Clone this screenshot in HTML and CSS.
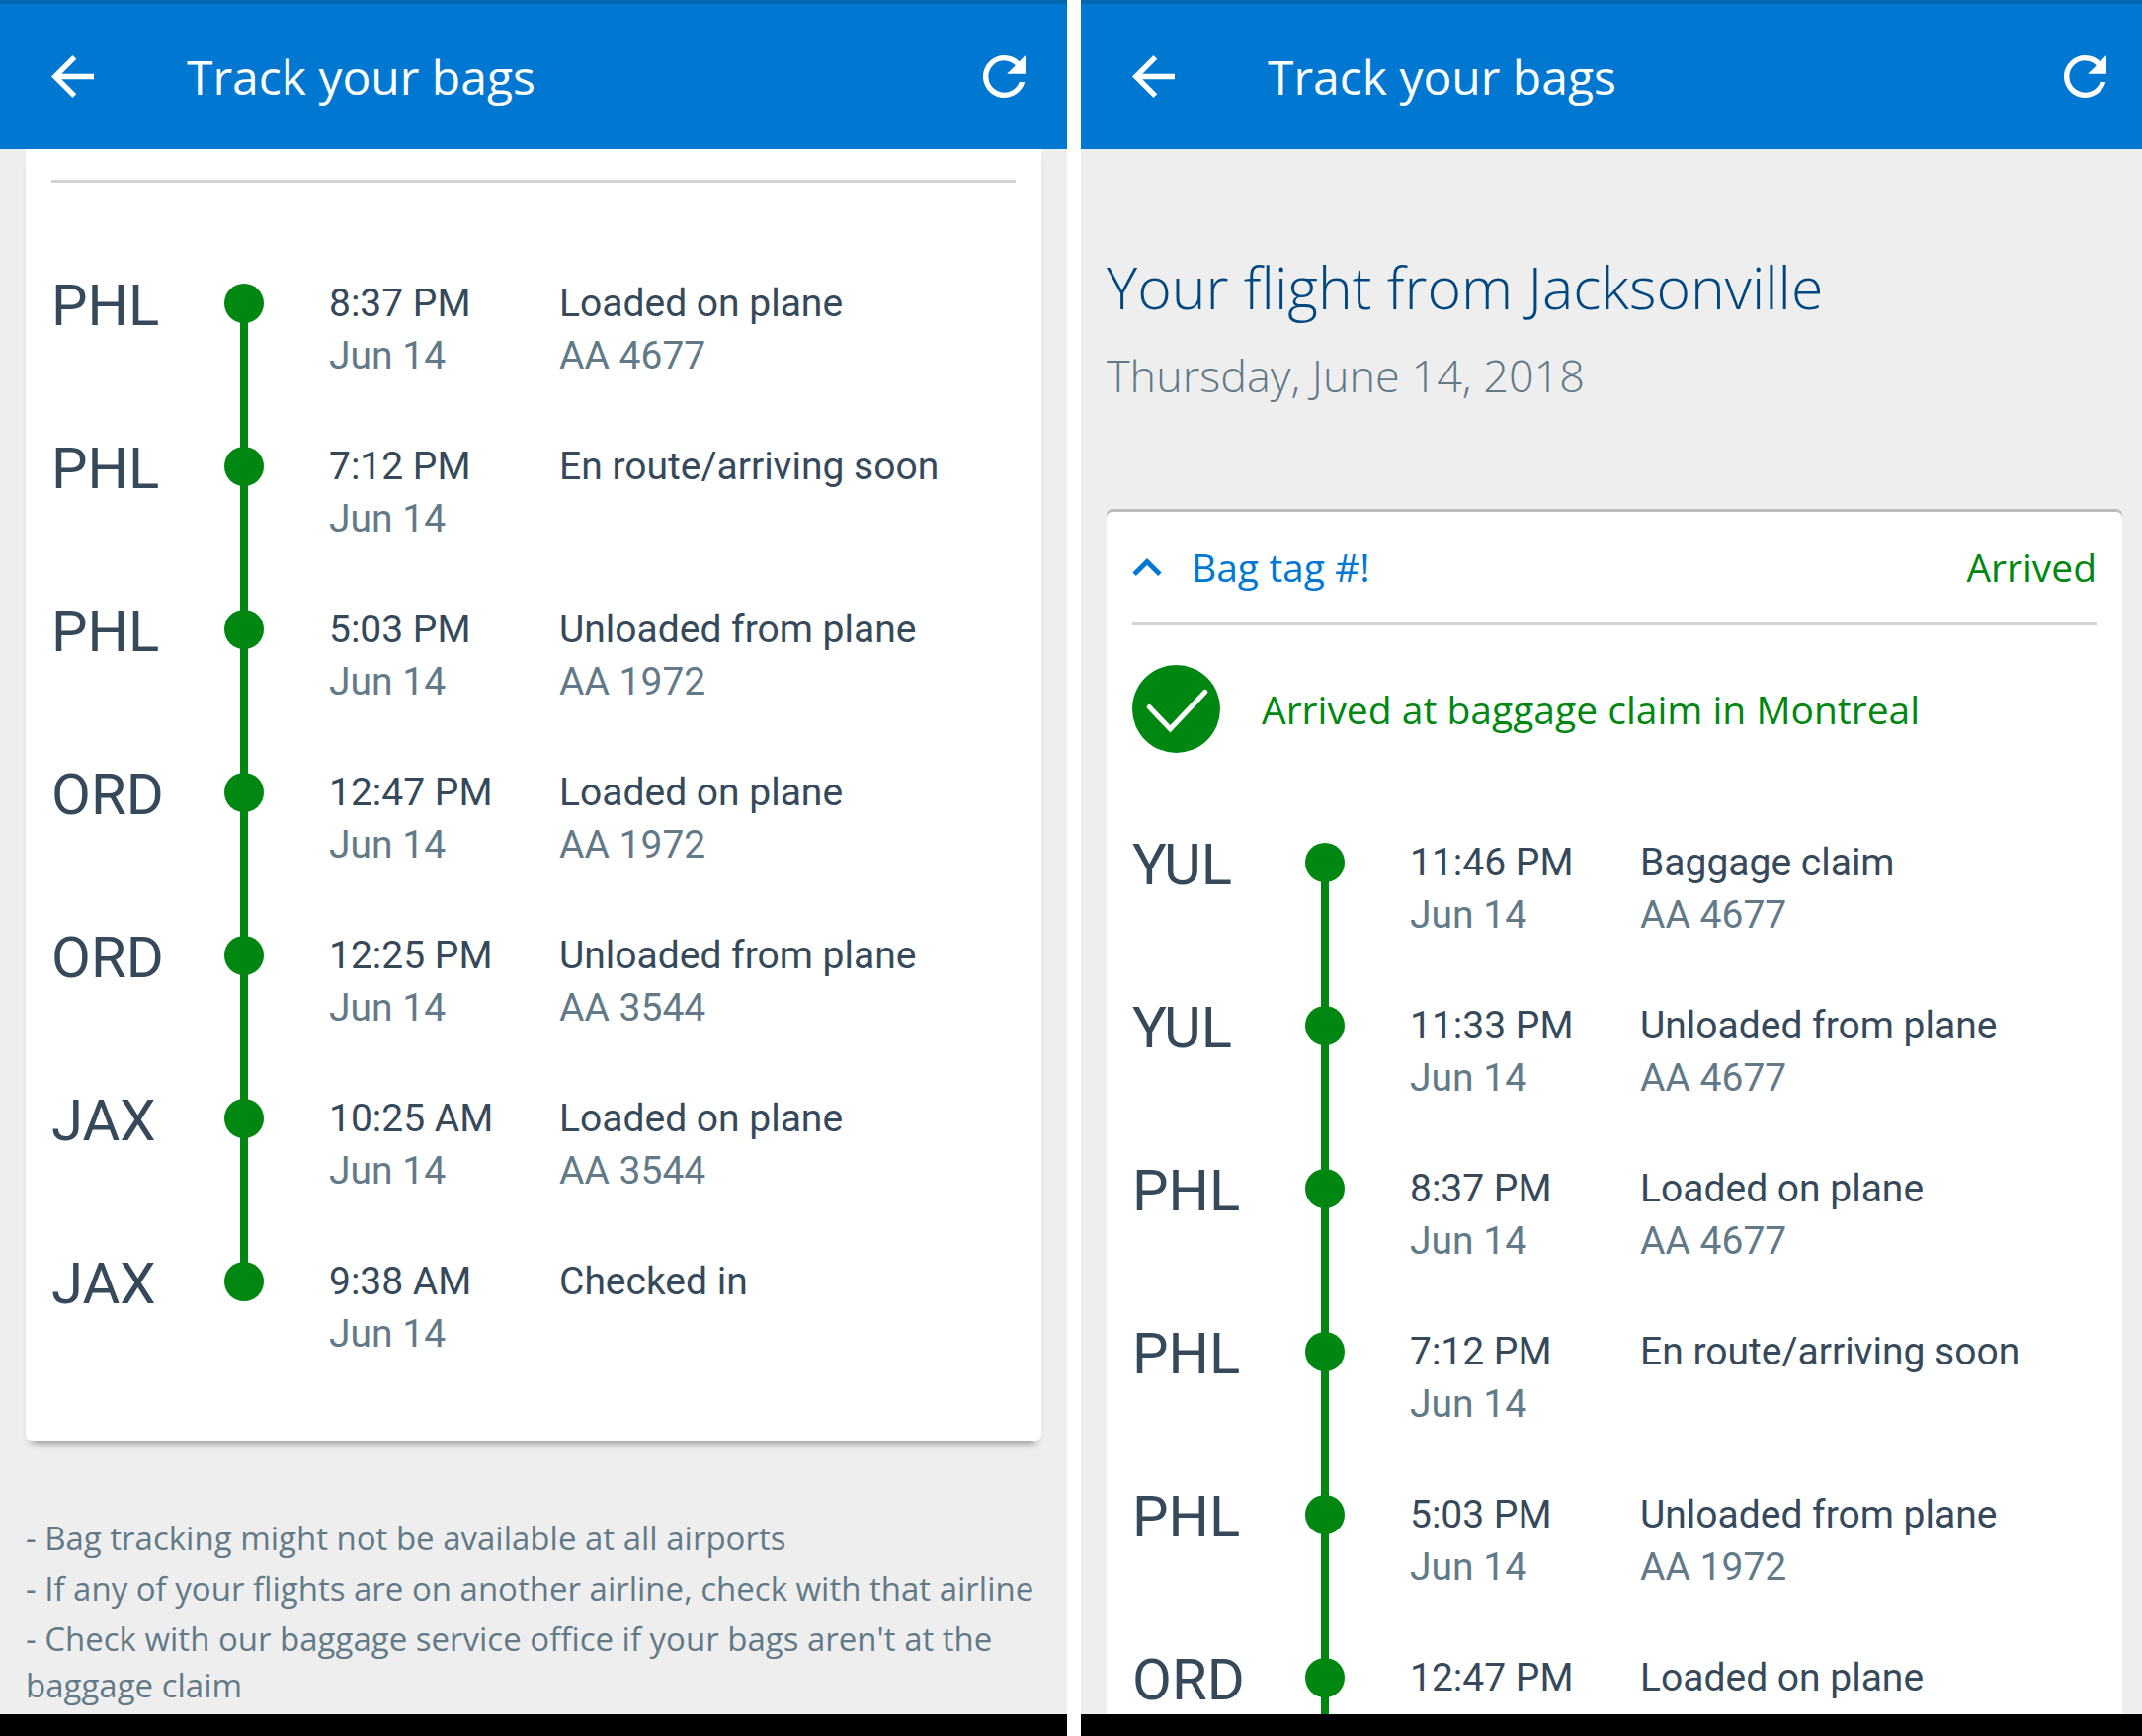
FILE: index.html
```html
<!DOCTYPE html>
<html lang="en">
<head>
<meta charset="utf-8">
<title>Track your bags</title>
<link rel="stylesheet" href="styles.css">
</head>
<body>
<div class="screens">
  <section class="screen">
    <header class="appbar">
      <button class="icon-button" type="button" aria-label="Back"><svg viewBox="4 4 16 16"><path d="M20 11H7.83l5.59-5.59L12 4l-8 8 8 8 1.41-1.41L7.83 13H20v-2z"/></svg></button>
      <h1 class="appbar-title">Track your bags</h1>
      <button class="icon-button" type="button" aria-label="Refresh"><svg viewBox="4 4 16 16"><path d="M17.65 6.35A7.958 7.958 0 0 0 12 4a8 8 0 1 0 7.73 10h-2.08A6 6 0 1 1 12 6c1.66 0 3.14.69 4.22 1.78L13 11h7V4l-2.35 2.35z"/></svg></button>
    </header>
    <main class="content">
      <article class="card card-end">
        <hr class="divider">
        <ol class="timeline">
          <li class="event"><span class="code">PHL</span><span class="marker"></span><div class="lines"><span>8:37 PM</span><span class="muted">Jun 14</span></div><div class="lines"><span>Loaded on plane</span><span class="muted">AA 4677</span></div></li>
          <li class="event"><span class="code">PHL</span><span class="marker"></span><div class="lines"><span>7:12 PM</span><span class="muted">Jun 14</span></div><div class="lines"><span>En route/arriving soon</span></div></li>
          <li class="event"><span class="code">PHL</span><span class="marker"></span><div class="lines"><span>5:03 PM</span><span class="muted">Jun 14</span></div><div class="lines"><span>Unloaded from plane</span><span class="muted">AA 1972</span></div></li>
          <li class="event"><span class="code">ORD</span><span class="marker"></span><div class="lines"><span>12:47 PM</span><span class="muted">Jun 14</span></div><div class="lines"><span>Loaded on plane</span><span class="muted">AA 1972</span></div></li>
          <li class="event"><span class="code">ORD</span><span class="marker"></span><div class="lines"><span>12:25 PM</span><span class="muted">Jun 14</span></div><div class="lines"><span>Unloaded from plane</span><span class="muted">AA 3544</span></div></li>
          <li class="event"><span class="code">JAX</span><span class="marker"></span><div class="lines"><span>10:25 AM</span><span class="muted">Jun 14</span></div><div class="lines"><span>Loaded on plane</span><span class="muted">AA 3544</span></div></li>
          <li class="event event-first"><span class="code">JAX</span><span class="marker"></span><div class="lines"><span>9:38 AM</span><span class="muted">Jun 14</span></div><div class="lines"><span>Checked in</span></div></li>
        </ol>
      </article>
      <div class="notes">
        <p>- Bag tracking might not be available at all airports</p>
        <p>- If any of your flights are on another airline, check with that airline</p>
        <p>- Check with our baggage service office if your bags aren't at the baggage claim</p>
      </div>
    </main>
    <div class="navbar"></div>
  </section>

  <section class="screen screen-right">
    <header class="appbar">
      <button class="icon-button" type="button" aria-label="Back"><svg viewBox="4 4 16 16"><path d="M20 11H7.83l5.59-5.59L12 4l-8 8 8 8 1.41-1.41L7.83 13H20v-2z"/></svg></button>
      <h1 class="appbar-title">Track your bags</h1>
      <button class="icon-button" type="button" aria-label="Refresh"><svg viewBox="4 4 16 16"><path d="M17.65 6.35A7.958 7.958 0 0 0 12 4a8 8 0 1 0 7.73 10h-2.08A6 6 0 1 1 12 6c1.66 0 3.14.69 4.22 1.78L13 11h7V4l-2.35 2.35z"/></svg></button>
    </header>
    <main class="content">
      <div class="flight">
        <h2 class="flight-title">Your flight from Jacksonville</h2>
        <p class="flight-date">Thursday, June 14, 2018</p>
      </div>
      <article class="card card-start">
        <div class="card-head">
          <button class="toggle" type="button" aria-expanded="true"><svg class="chevron" viewBox="6 8 12 7.4"><path d="M12 8l-6 6 1.41 1.41L12 10.83l4.59 4.58L18 14z"/></svg>Bag tag #!</button>
          <span class="state">Arrived</span>
        </div>
        <hr class="divider">
        <div class="status">
          <svg class="check" viewBox="0 0 88 88"><circle cx="44" cy="44" r="44"/><path d="M17 42L38 64L73 27"/></svg>
          <span>Arrived at baggage claim in Montreal</span>
        </div>
        <ol class="timeline">
          <li class="event"><span class="code">YUL</span><span class="marker"></span><div class="lines"><span>11:46 PM</span><span class="muted">Jun 14</span></div><div class="lines"><span>Baggage claim</span><span class="muted">AA 4677</span></div></li>
          <li class="event"><span class="code">YUL</span><span class="marker"></span><div class="lines"><span>11:33 PM</span><span class="muted">Jun 14</span></div><div class="lines"><span>Unloaded from plane</span><span class="muted">AA 4677</span></div></li>
          <li class="event"><span class="code">PHL</span><span class="marker"></span><div class="lines"><span>8:37 PM</span><span class="muted">Jun 14</span></div><div class="lines"><span>Loaded on plane</span><span class="muted">AA 4677</span></div></li>
          <li class="event"><span class="code">PHL</span><span class="marker"></span><div class="lines"><span>7:12 PM</span><span class="muted">Jun 14</span></div><div class="lines"><span>En route/arriving soon</span></div></li>
          <li class="event"><span class="code">PHL</span><span class="marker"></span><div class="lines"><span>5:03 PM</span><span class="muted">Jun 14</span></div><div class="lines"><span>Unloaded from plane</span><span class="muted">AA 1972</span></div></li>
          <li class="event"><span class="code">ORD</span><span class="marker"></span><div class="lines"><span>12:47 PM</span></div><div class="lines"><span>Loaded on plane</span></div></li>
        </ol>
      </article>
    </main>
    <div class="navbar"></div>
  </section>
</div>
</body>
</html>
```
FILE: styles.css
```css
* { box-sizing: border-box; }

body, h1, h2, p, ol { margin: 0; padding: 0; }

body {
  background: #fff;
  color: #36495a;
  font-family: "Open Sans", "Noto Sans", sans-serif;
}

button {
  padding: 0;
  border: 0;
  background: none;
  color: inherit;
  font: inherit;
  cursor: pointer;
}

svg { display: block; }

.screens {
  display: grid;
  grid-template-columns: 1080fr 1074fr;
  gap: 14px;
  height: 100vh;
}

.screen {
  --edge: 26px;
  display: flex;
  flex-direction: column;
  min-width: 0;
  min-height: 0;
  background: #eee;
}

.screen-right { --edge: 20px; }

.appbar {
  display: flex;
  flex: none;
  align-items: center;
  height: 151px;
  padding: 0 calc(var(--edge) + 16px) 0 52px;
  border-top: 4px solid #0067ae;
  background: #0078d2;
  color: #fff;
}

.icon-button svg {
  width: 43px;
  height: 43px;
  fill: currentColor;
}

.appbar-title {
  flex: 1;
  margin-left: 94px;
  font-size: 48px;
  font-weight: 400;
  line-height: 64px;
}

.content {
  flex: 1;
  min-height: 0;
  overflow: hidden;
  padding: 0 var(--edge) 0 26px;
}

.navbar {
  flex: none;
  height: 22px;
  background: #000;
}

.card {
  padding: 0 26px 16px;
  background: #fff;
}

.card-end {
  padding-top: 31px;
  border-radius: 0 0 6px 6px;
  box-shadow: 0 8px 8px -6px #888;
}

.card-start {
  border-radius: 6px 6px 0 0;
  box-shadow: 0 -3px 0 #bbb;
}

.divider {
  height: 3px;
  margin: 0;
  border: 0;
  background: #d3d3d3;
}

.timeline {
  font-family: Roboto, sans-serif;
  font-size: 39px;
  line-height: 40px;
  list-style: none;
}

.card-end .timeline { margin-top: 102px; }

.event {
  display: grid;
  grid-template-columns: 175px 106px 233px 1fr;
  min-height: 165px;
}

.code {
  font-size: 58px;
  line-height: 44px;
}

.marker {
  display: flex;
  flex-direction: column;
  align-items: center;
  width: 40px;
}

.marker::before {
  width: 40px;
  height: 40px;
  border-radius: 50%;
  background: #008712;
  content: "";
}

.marker::after {
  flex: 1;
  width: 8px;
  margin: -2px 0;
  background: #008712;
  content: "";
}

.event-first .marker::after { display: none; }

.lines {
  display: flex;
  flex-direction: column;
  gap: 13px;
  white-space: nowrap;
}

.muted { color: #627a88; }

.notes {
  display: grid;
  gap: 4px;
  margin-top: 75px;
  color: #627a88;
  font-size: 33px;
  line-height: 47px;
}

.flight { padding: 99px 0 108px; }

.flight-title {
  color: #00467f;
  font-size: 59px;
  font-weight: 300;
  line-height: 80px;
}

.flight-date {
  margin-top: 20px;
  color: #627a88;
  font-size: 45px;
  font-weight: 300;
  line-height: 60px;
}

.card-head {
  display: flex;
  align-items: center;
  justify-content: space-between;
  height: 112px;
  font-size: 39px;
  line-height: 56px;
}

.toggle {
  display: flex;
  align-items: center;
  gap: 30px;
  color: #0078d2;
}

.chevron {
  width: 30px;
  height: 18px;
  fill: currentColor;
}

.state, .status { color: #008712; }

.status {
  display: flex;
  align-items: center;
  gap: 42px;
  padding: 40px 0 91px;
  font-size: 39px;
  line-height: 56px;
}

.check {
  flex: none;
  width: 89px;
  height: 89px;
}

.check circle { fill: #008712; }

.check path {
  fill: none;
  stroke: #fff;
  stroke-width: 5;
  stroke-linecap: round;
}
```
